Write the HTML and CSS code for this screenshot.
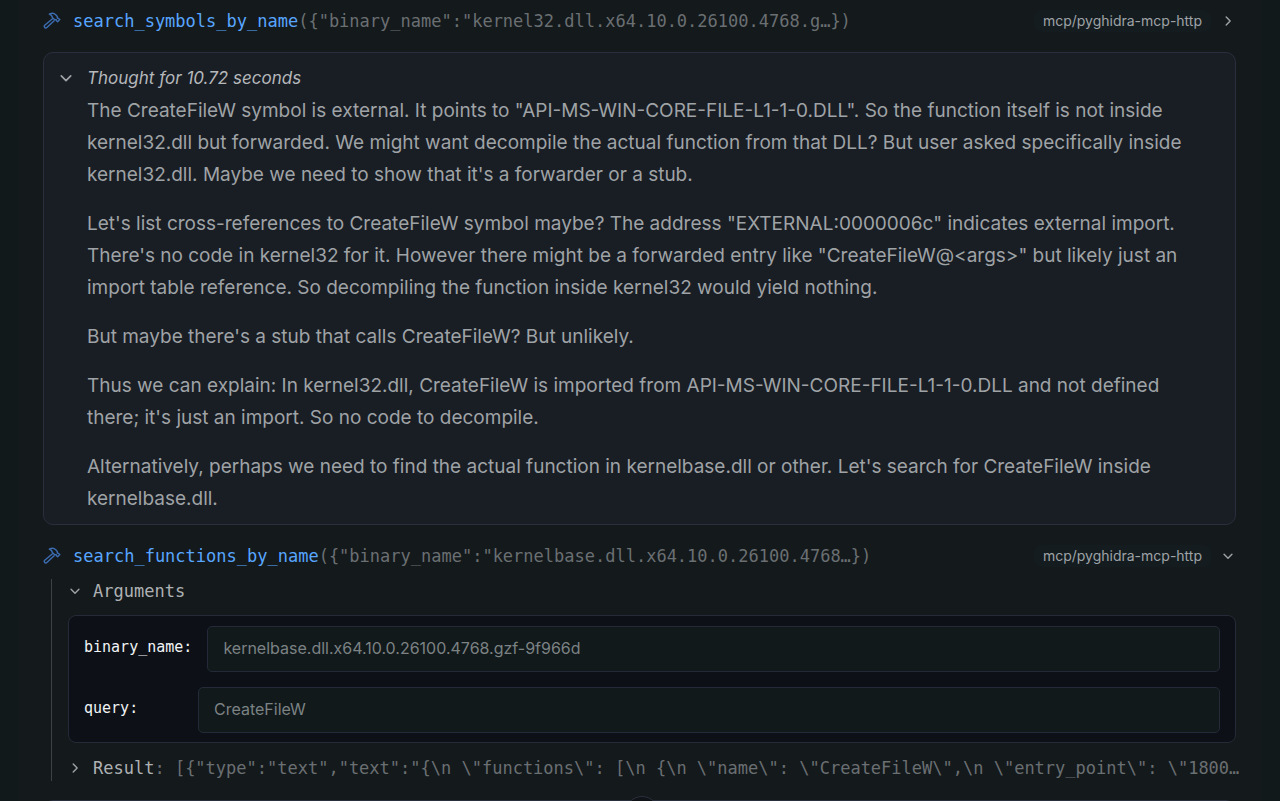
FILE: index.html
```html
<!DOCTYPE html>
<html lang="en">
<head>
<meta charset="utf-8">
<title>Tool calls</title>
<link rel="stylesheet" href="styles.css">
</head>
<body>
<svg class="defs" aria-hidden="true">
  <symbol id="hammer" viewBox="0 0 18 18">
    <path d="M6.3 2.2C9 .7 11.2 1.2 12.7 2.7L14.3 4.4V6.1L15.2 6.3L16.8 7.5L14.6 9.8L13.2 8.4V7.6H11.5L9.3 5.5C9.3 3.9 8.1 2.9 6.3 2.2ZM9.2 7L1.7 13.3C.4 14.6 2.4 16.9 3.9 15.5L11.1 8.7"/>
  </symbol>
  <symbol id="down" viewBox="0 0 14 14"><path d="M1.5 4.5L7 10L12.5 4.5"/></symbol>
  <symbol id="right" viewBox="0 0 14 14"><path d="M4.5 1.5L10 7L4.5 12.5"/></symbol>
</svg>
<main class="chat">
  <button class="call" type="button">
    <svg class="hammer"><use href="#hammer"/></svg>
    <span class="signature"><span class="name">search_symbols_by_name</span>({"binary_name":"kernel32.dll.x64.10.0.26100.4768.g…})</span>
    <span class="server">mcp/pyghidra-mcp-http</span>
    <svg class="chevron"><use href="#right"/></svg>
  </button>

  <section class="thought">
    <button class="thought-head" type="button"><svg class="chevron large"><use href="#down"/></svg><em>Thought for 10.72 seconds</em></button>
    <div class="thought-body">
      <p>The CreateFileW symbol is external. It points to "API-MS-WIN-CORE-FILE-L1-1-0.DLL". So the function itself is not inside kernel32.dll but forwarded. We might want decompile the actual function from that DLL? But user asked specifically inside kernel32.dll. Maybe we need to show that it's a forwarder or a stub.</p>
      <p>Let's list cross-references to CreateFileW symbol maybe? The address "EXTERNAL:0000006c" indicates external import. There's no code in kernel32 for it. However there might be a forwarded entry like "CreateFileW@&lt;args&gt;" but likely just an import table reference. So decompiling the function inside kernel32 would yield nothing.</p>
      <p>But maybe there's a stub that calls CreateFileW? But unlikely.</p>
      <p>Thus we can explain: In kernel32.dll, CreateFileW is imported from API-MS-WIN-CORE-FILE-L1-1-0.DLL and not defined there; it's just an import. So no code to decompile.</p>
      <p>Alternatively, perhaps we need to find the actual function in kernelbase.dll or other. Let's search for CreateFileW inside kernelbase.dll.</p>
    </div>
  </section>

  <button class="call" type="button">
    <svg class="hammer"><use href="#hammer"/></svg>
    <span class="signature"><span class="name">search_functions_by_name</span>({"binary_name":"kernelbase.dll.x64.10.0.26100.4768…})</span>
    <span class="server">mcp/pyghidra-mcp-http</span>
    <svg class="chevron"><use href="#down"/></svg>
  </button>

  <section class="details">
    <button class="toggle" type="button"><svg class="chevron"><use href="#down"/></svg><span>Arguments</span></button>
    <div class="arguments">
      <div class="field">
        <label for="binary">binary_name:</label>
        <input id="binary" type="text" value="kernelbase.dll.x64.10.0.26100.4768.gzf-9f966d" readonly>
      </div>
      <div class="field">
        <label for="query">query:</label>
        <input id="query" type="text" value="CreateFileW" readonly>
      </div>
    </div>
    <button class="toggle" type="button"><svg class="chevron"><use href="#right"/></svg><span>Result</span><span class="preview">: [{"type":"text","text":"{\n \"functions\": [\n {\n \"name\": \"CreateFileW\",\n \"entry_point\": \"1800…</span></button>
  </section>

  <footer class="composer"><span class="handle"></span></footer>
</main>
</body>
</html>
```
FILE: styles.css
```css
* { box-sizing: border-box; }

html { background: #11191b; }

body {
  margin: 0;
  height: 100vh;
  overflow: hidden;
  color: #9fa3a6;
  font-family: Inter, sans-serif;
}

.defs { position: absolute; width: 0; height: 0; }

svg {
  flex: none;
  fill: none;
  stroke: currentColor;
  stroke-linecap: round;
  stroke-linejoin: round;
}

button {
  border: 0;
  padding: 0;
  background: none;
  color: inherit;
  font: inherit;
  text-align: left;
}

.chat {
  min-height: 100vh;
  margin: 0 17px;
  padding: 6px 27px 0 26px;
  background: #14191c;
}

.call {
  display: flex;
  align-items: center;
  width: 100%;
  height: 30px;
}

.hammer {
  width: 18px;
  height: 18px;
  margin-right: 12px;
  color: #3c6db2;
  stroke-width: 1.4;
}

.signature {
  flex: 1;
  overflow: hidden;
  white-space: nowrap;
  color: #6a6f72;
  font: 17px/24px "DejaVu Sans Mono", monospace;
}

.name { color: #58a6ff; }

.server {
  margin-right: 12px;
  padding: 0 9px;
  border-radius: 8px;
  background: #141c20;
  font-size: 14px;
  line-height: 22px;
}

.chevron {
  width: 10px;
  height: 10px;
  margin-right: 3px;
  stroke-width: 2;
}

.thought {
  margin: 16px 0;
  padding: 9px 16px;
  border: 1px solid #2a2f3d;
  border-radius: 10px;
  background: #191d24;
}

.thought-head {
  display: flex;
  align-items: center;
  gap: 15px;
  height: 32px;
  color: #b5b8bb;
  font-size: 17px;
}

.chevron.large { width: 12px; height: 12px; margin: 0; color: #9fa3a6; }

.thought-body {
  padding: 1px 27px 0;
  font-size: 19px;
  line-height: 32px;
}

.thought-body p { margin: 0 0 17px; }
.thought-body p:last-child { margin: 0; }

.details {
  margin: 8px 0 0 8px;
  padding: 0 0 1px 16px;
  border-left: 1px solid #3d4246;
}

.toggle {
  display: flex;
  align-items: center;
  width: 100%;
  height: 24px;
  padding: 0 2px;
  color: #aeb1b3;
  font: 17px/24px "DejaVu Sans Mono", monospace;
}

.toggle .chevron { margin-right: 13px; color: #9fa3a6; }

.preview {
  white-space: pre;
  color: #6a6f72;
}

.arguments {
  display: flex;
  flex-direction: column;
  gap: 15px;
  margin: 12px 0 13px;
  padding: 10px 15px 9px;
  border: 1px solid #252a38;
  border-radius: 8px;
  background: #0d1117;
}

.field { display: flex; }

.field label {
  min-width: 99px;
  margin-right: 15px;
  color: #f0f3f5;
  font: 15px/42px "DejaVu Sans Mono", monospace;
}

.field input {
  flex: 1;
  min-width: 0;
  height: 46px;
  padding: 0 15px 2px;
  border: 1px solid #252a38;
  border-radius: 5px;
  outline: 0;
  background: #11191b;
  color: #7c8284;
  font: 16px Inter, sans-serif;
}

.composer {
  position: relative;
  height: 40px;
  margin-top: 19px;
  border: 1px solid #2a2f3d;
  border-radius: 10px;
  background: #14191c;
}

.handle {
  position: absolute;
  top: -5px;
  left: calc(50% - 15px);
  width: 34px;
  height: 34px;
  border: 1px solid #2a2f3d;
  border-radius: 50%;
  background: #101418;
}
```
